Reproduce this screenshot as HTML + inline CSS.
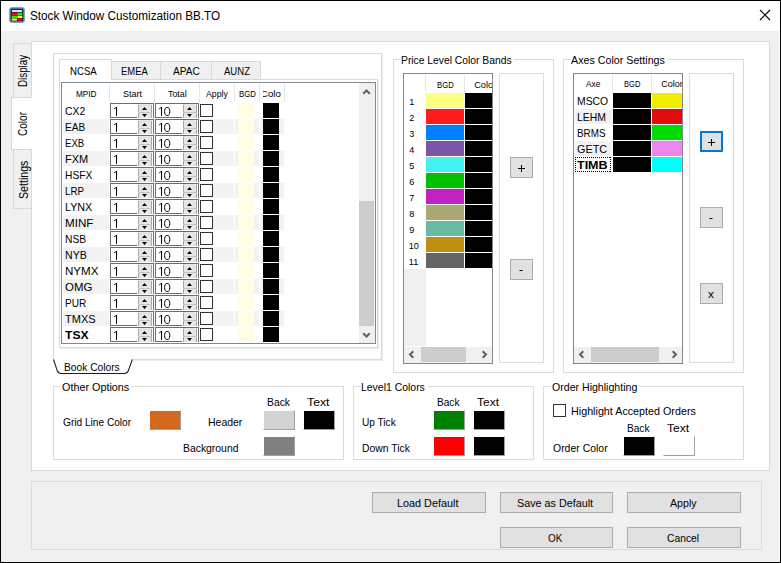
<!DOCTYPE html><html><head><meta charset="utf-8"><style>
html,body{margin:0;padding:0}
body{width:781px;height:563px;position:relative;overflow:hidden;background:#f0f0f0;font-family:"Liberation Sans",sans-serif}
.a{position:absolute;box-sizing:border-box}
.t{position:absolute;white-space:nowrap;line-height:normal}
</style></head><body>
<div class="a" style="left:0px;top:0px;width:781px;height:31px;background:#fff"></div>
<div class="a" style="left:0px;top:0px;width:1px;height:563px;background:#000"></div>
<div class="a" style="left:780px;top:0px;width:1px;height:563px;background:#000"></div>
<div class="a" style="left:0px;top:0px;width:781px;height:1px;background:#000"></div>
<div class="a" style="left:0px;top:562px;width:781px;height:1px;background:#000"></div>
<div class="a" style="left:779px;top:31px;width:1px;height:531px;background:#fff"></div>
<svg class="a" style="left:9px;top:7px" width="16" height="16" viewBox="0 0 16 16">
<rect x="0.5" y="0.5" width="15" height="15" rx="2.5" fill="#4f6f98" stroke="#86a0c0"/>
<rect x="2" y="2" width="12" height="12" fill="#1c2838"/>
<rect x="3" y="3" width="10" height="2" fill="#d4e0ff"/>
<rect x="2.7" y="5.8" width="5.2" height="2.3" fill="#f00"/><rect x="8.3" y="5.8" width="4.9" height="2.3" fill="#0f0"/>
<rect x="2.7" y="8.7" width="5.2" height="2.3" fill="#0f0"/><rect x="8.3" y="8.7" width="4.9" height="2.3" fill="#ff0"/>
<rect x="2.7" y="11.5" width="5.2" height="2.1" fill="#ff0"/><rect x="8.3" y="11.5" width="4.9" height="2.1" fill="#f00"/>
</svg>
<div id="title" class="t" style="left:30.00px;top:9.06px;font-size:11.87px;color:#000;"><span style="display:inline-block;transform-origin:0 0;transform:scaleX(0.9894);white-space:pre">Stock Window Customization BB.TO</span></div>
<svg class="a" style="left:755px;top:5px" width="20" height="20" viewBox="0 0 20 20"><path d="M5 5 L15 15 M15 5 L5 15" stroke="#000" stroke-width="1.1"/></svg>
<div class="a" style="left:31px;top:41px;width:739px;height:430px;background:#fff"></div>
<div class="a" style="left:31px;top:41px;width:739px;height:430px;border:1px solid #d9d9d9"></div>
<div class="a" style="left:13px;top:43px;width:18px;height:54px;background:#f0f0f0"></div>
<div class="a" style="left:13px;top:43px;width:18px;height:1px;background:#d9d9d9"></div>
<div class="a" style="left:13px;top:43px;width:1px;height:54px;background:#d9d9d9"></div>
<div class="a" style="left:13px;top:150px;width:18px;height:58px;background:#f0f0f0"></div>
<div class="a" style="left:13px;top:208px;width:18px;height:1px;background:#d9d9d9"></div>
<div class="a" style="left:13px;top:150px;width:1px;height:59px;background:#d9d9d9"></div>
<div class="a" style="left:13px;top:149px;width:18px;height:1px;background:#d9d9d9"></div>
<div class="a" style="left:11px;top:97px;width:21px;height:53px;background:#fff"></div>
<div class="a" style="left:11px;top:97px;width:21px;height:1px;background:#d9d9d9"></div>
<div class="a" style="left:11px;top:149px;width:21px;height:1px;background:#d9d9d9"></div>
<div class="a" style="left:11px;top:97px;width:1px;height:53px;background:#d9d9d9"></div>
<div id="tabDisplay" class="t" style="left:16.18px;top:86.90px;font-size:12.29px;transform-origin:0 0;transform:rotate(-90deg) scaleX(0.7965)">Display</div>
<div id="tabColor" class="t" style="left:15.07px;top:136.00px;font-size:12.85px;transform-origin:0 0;transform:rotate(-90deg) scaleX(0.7815)">Color</div>
<div id="tabSettings" class="t" style="left:16.73px;top:199.20px;font-size:12.01px;transform-origin:0 0;transform:rotate(-90deg) scaleX(0.8849)">Settings</div>
<div class="a" style="left:53px;top:53px;width:1px;height:307px;background:#d9d9d9"></div>
<div class="a" style="left:381px;top:53px;width:1px;height:307px;background:#d9d9d9"></div>
<div class="a" style="left:53px;top:53px;width:329px;height:1px;background:#d9d9d9"></div>
<div class="a" style="left:132px;top:359px;width:250px;height:1px;background:#d9d9d9"></div>
<div class="a" style="left:382px;top:54px;width:1px;height:307px;background:#ececec"></div>
<div class="a" style="left:133px;top:360px;width:250px;height:1px;background:#ececec"></div>
<svg class="a" style="left:0;top:0" width="781" height="563"><path d="M53.5 359.5 L57.3 370.8 Q58.3 373.5 61 373.5 L124.5 373.5 Q127.3 373.5 128.3 370.8 L132.3 359.5" fill="none" stroke="#1a1a1a" stroke-width="1.05"/></svg>
<div id="bookColors" class="t" style="left:64.30px;top:361.75px;font-size:10.34px;color:#000;"><span style="display:inline-block;transform-origin:0 0;transform:scaleX(0.9894);white-space:pre">Book Colors</span></div>
<div class="a" style="left:59px;top:79px;width:319px;height:269px;border:1px solid #d9d9d9"></div>
<div class="a" style="left:378px;top:80px;width:1px;height:269px;background:#ececec"></div>
<div class="a" style="left:60px;top:348px;width:319px;height:1px;background:#ececec"></div>
<div class="a" style="left:60px;top:59px;width:51px;height:21px;background:#fff"></div>
<div class="a" style="left:59px;top:59px;width:53px;height:1px;background:#d9d9d9"></div>
<div class="a" style="left:59px;top:59px;width:1px;height:21px;background:#d9d9d9"></div>
<div class="a" style="left:111px;top:59px;width:1px;height:21px;background:#d9d9d9"></div>
<div class="a" style="left:111px;top:61px;width:50px;height:18px;background:#f0f0f0"></div>
<div class="a" style="left:111px;top:61px;width:50px;height:1px;background:#d9d9d9"></div>
<div class="a" style="left:111px;top:61px;width:1px;height:18px;background:#d9d9d9"></div>
<div class="a" style="left:160px;top:61px;width:1px;height:18px;background:#d9d9d9"></div>
<div class="a" style="left:160px;top:61px;width:52px;height:18px;background:#f0f0f0"></div>
<div class="a" style="left:160px;top:61px;width:52px;height:1px;background:#d9d9d9"></div>
<div class="a" style="left:160px;top:61px;width:1px;height:18px;background:#d9d9d9"></div>
<div class="a" style="left:211px;top:61px;width:1px;height:18px;background:#d9d9d9"></div>
<div class="a" style="left:211px;top:61px;width:50px;height:18px;background:#f0f0f0"></div>
<div class="a" style="left:211px;top:61px;width:50px;height:1px;background:#d9d9d9"></div>
<div class="a" style="left:211px;top:61px;width:1px;height:18px;background:#d9d9d9"></div>
<div class="a" style="left:260px;top:61px;width:1px;height:18px;background:#d9d9d9"></div>
<div id="tNCSA" class="t" style="left:70.20px;top:64.77px;font-size:10.75px;color:#000;"><span style="display:inline-block;transform-origin:0 0;transform:scaleX(0.8971);white-space:pre">NCSA</span></div>
<div id="tEMEA" class="t" style="left:121.40px;top:65.65px;font-size:10.34px;color:#000;"><span style="display:inline-block;transform-origin:0 0;transform:scaleX(0.9184);white-space:pre">EMEA</span></div>
<div id="tAPAC" class="t" style="left:172.70px;top:65.65px;font-size:10.34px;color:#000;"><span style="display:inline-block;transform-origin:0 0;transform:scaleX(0.9789);white-space:pre">APAC</span></div>
<div id="tAUNZ" class="t" style="left:224.00px;top:65.65px;font-size:10.34px;color:#000;"><span style="display:inline-block;transform-origin:0 0;transform:scaleX(0.9242);white-space:pre">AUNZ</span></div>
<div class="a" style="left:61px;top:82px;width:315px;height:262px;border:1px solid #828790"></div>
<div class="a" style="left:109px;top:84px;width:1px;height:18px;background:#e5e5e5"></div>
<div class="a" style="left:154px;top:84px;width:1px;height:18px;background:#e5e5e5"></div>
<div class="a" style="left:199px;top:84px;width:1px;height:18px;background:#e5e5e5"></div>
<div class="a" style="left:234px;top:84px;width:1px;height:18px;background:#e5e5e5"></div>
<div class="a" style="left:259px;top:84px;width:1px;height:18px;background:#e5e5e5"></div>
<div class="a" style="left:284px;top:84px;width:1px;height:18px;background:#e5e5e5"></div>
<div id="h1" class="t" style="left:75.50px;top:88.66px;font-size:9.22px;color:#000;"><span style="display:inline-block;transform-origin:0 0;transform:scaleX(0.8896);white-space:pre">MPID</span></div>
<div id="h2" class="t" style="left:123.00px;top:88.66px;font-size:9.22px;color:#000;"><span style="display:inline-block;transform-origin:0 0;transform:scaleX(0.9760);white-space:pre">Start</span></div>
<div id="h3" class="t" style="left:168.00px;top:88.66px;font-size:9.22px;color:#000;"><span style="display:inline-block;transform-origin:0 0;transform:scaleX(0.9605);white-space:pre">Total</span></div>
<div id="h4" class="t" style="left:206.00px;top:88.66px;font-size:9.22px;color:#000;"><span style="display:inline-block;transform-origin:0 0;transform:scaleX(0.9456);white-space:pre">Apply</span></div>
<div id="h5" class="t" style="left:239.30px;top:88.66px;font-size:9.22px;color:#000;"><span style="display:inline-block;transform-origin:0 0;transform:scaleX(0.8461);white-space:pre">BGD</span></div>
<div class="a" style="left:263px;top:88.66px;width:18px;height:12.0px;overflow:hidden"><div id="h6" class="t" style="left:260.50px;top:88.66px;font-size:9.22px;color:#000;;left:-2.50px;top:0"><span style="display:inline-block;transform-origin:0 0;transform:scaleX(1.0440);white-space:pre">Color</span></div></div>
<div class="a" style="left:238px;top:103px;width:16px;height:15px;background:#fffde2"></div>
<div class="a" style="left:263px;top:103px;width:16px;height:15px;background:#000"></div>
<div id="n0" class="t" style="left:65.30px;top:105.01px;font-size:11.59px;color:#000;"><span style="display:inline-block;transform-origin:0 0;transform:scaleX(0.8959);white-space:pre">CX2</span></div>
<div class="a" style="left:110px;top:103px;width:44px;height:15px;background:#fff"></div>
<div class="a" style="left:110px;top:103px;width:44px;height:1px;background:#6d6d6d"></div>
<div class="a" style="left:110px;top:103px;width:1px;height:15px;background:#6d6d6d"></div>
<div class="a" style="left:153px;top:103px;width:1px;height:15px;background:#6d6d6d"></div>
<div class="a" style="left:110px;top:117px;width:27px;height:1px;background:#6d6d6d"></div>
<div class="a" style="left:138px;top:104px;width:14px;height:14px;background:#e6e6e6"></div>
<div class="a" style="left:138px;top:105px;width:1px;height:13px;background:#a6a6a6"></div>
<div class="a" style="left:151px;top:105px;width:1px;height:13px;background:#a6a6a6"></div>
<div class="a" style="left:138px;top:112px;width:14px;height:1px;background:#c4c4c4"></div>
<svg class="a" style="left:141px;top:106px" width="7" height="12"><path d="M1 4 L3.5 1 L6 4 Z M1 8 L3.5 11 L6 8 Z" fill="#000"/></svg>
<svg class="a" style="left:110px;top:103px" width="27" height="15"><path d="M6.5 4 V13 M4.2 5.8 L6.5 4.2" stroke="#000" stroke-width="1" fill="none"/></svg>
<div class="a" style="left:155px;top:103px;width:44px;height:15px;background:#fff"></div>
<div class="a" style="left:155px;top:103px;width:44px;height:1px;background:#6d6d6d"></div>
<div class="a" style="left:155px;top:103px;width:1px;height:15px;background:#6d6d6d"></div>
<div class="a" style="left:198px;top:103px;width:1px;height:15px;background:#6d6d6d"></div>
<div class="a" style="left:155px;top:117px;width:27px;height:1px;background:#6d6d6d"></div>
<div class="a" style="left:183px;top:104px;width:14px;height:14px;background:#e6e6e6"></div>
<div class="a" style="left:183px;top:105px;width:1px;height:13px;background:#a6a6a6"></div>
<div class="a" style="left:196px;top:105px;width:1px;height:13px;background:#a6a6a6"></div>
<div class="a" style="left:183px;top:112px;width:14px;height:1px;background:#c4c4c4"></div>
<svg class="a" style="left:186px;top:106px" width="7" height="12"><path d="M1 4 L3.5 1 L6 4 Z M1 8 L3.5 11 L6 8 Z" fill="#000"/></svg>
<svg class="a" style="left:155px;top:103px" width="27" height="15"><path d="M6.5 4 V13 M4.2 5.8 L6.5 4.2" stroke="#000" stroke-width="1" fill="none"/><ellipse cx="12.2" cy="8.5" rx="2.6" ry="4.05" stroke="#000" stroke-width="1" fill="none"/></svg>
<div class="a" style="left:200px;top:104px;width:13px;height:13px;border:1px solid #333"></div>
<div class="a" style="left:201px;top:105px;width:11px;height:11px;background:#fff"></div>
<div class="a" style="left:63px;top:119px;width:46px;height:15px;background:#f2f2f2"></div>
<div class="a" style="left:110px;top:119px;width:44px;height:15px;background:#f2f2f2"></div>
<div class="a" style="left:155px;top:119px;width:44px;height:15px;background:#f2f2f2"></div>
<div class="a" style="left:200px;top:119px;width:34px;height:15px;background:#f2f2f2"></div>
<div class="a" style="left:235px;top:119px;width:24px;height:15px;background:#f2f2f2"></div>
<div class="a" style="left:260px;top:119px;width:24px;height:15px;background:#f2f2f2"></div>
<div class="a" style="left:238px;top:119px;width:16px;height:15px;background:#fffde2"></div>
<div class="a" style="left:263px;top:119px;width:16px;height:15px;background:#000"></div>
<div id="n1" class="t" style="left:65.30px;top:121.01px;font-size:11.59px;color:#000;"><span style="display:inline-block;transform-origin:0 0;transform:scaleX(0.8708);white-space:pre">EAB</span></div>
<div class="a" style="left:110px;top:119px;width:44px;height:15px;background:#fff"></div>
<div class="a" style="left:110px;top:119px;width:44px;height:1px;background:#6d6d6d"></div>
<div class="a" style="left:110px;top:119px;width:1px;height:15px;background:#6d6d6d"></div>
<div class="a" style="left:153px;top:119px;width:1px;height:15px;background:#6d6d6d"></div>
<div class="a" style="left:110px;top:133px;width:27px;height:1px;background:#6d6d6d"></div>
<div class="a" style="left:138px;top:120px;width:14px;height:14px;background:#e6e6e6"></div>
<div class="a" style="left:138px;top:121px;width:1px;height:13px;background:#a6a6a6"></div>
<div class="a" style="left:151px;top:121px;width:1px;height:13px;background:#a6a6a6"></div>
<div class="a" style="left:138px;top:128px;width:14px;height:1px;background:#c4c4c4"></div>
<svg class="a" style="left:141px;top:122px" width="7" height="12"><path d="M1 4 L3.5 1 L6 4 Z M1 8 L3.5 11 L6 8 Z" fill="#000"/></svg>
<svg class="a" style="left:110px;top:119px" width="27" height="15"><path d="M6.5 4 V13 M4.2 5.8 L6.5 4.2" stroke="#000" stroke-width="1" fill="none"/></svg>
<div class="a" style="left:155px;top:119px;width:44px;height:15px;background:#fff"></div>
<div class="a" style="left:155px;top:119px;width:44px;height:1px;background:#6d6d6d"></div>
<div class="a" style="left:155px;top:119px;width:1px;height:15px;background:#6d6d6d"></div>
<div class="a" style="left:198px;top:119px;width:1px;height:15px;background:#6d6d6d"></div>
<div class="a" style="left:155px;top:133px;width:27px;height:1px;background:#6d6d6d"></div>
<div class="a" style="left:183px;top:120px;width:14px;height:14px;background:#e6e6e6"></div>
<div class="a" style="left:183px;top:121px;width:1px;height:13px;background:#a6a6a6"></div>
<div class="a" style="left:196px;top:121px;width:1px;height:13px;background:#a6a6a6"></div>
<div class="a" style="left:183px;top:128px;width:14px;height:1px;background:#c4c4c4"></div>
<svg class="a" style="left:186px;top:122px" width="7" height="12"><path d="M1 4 L3.5 1 L6 4 Z M1 8 L3.5 11 L6 8 Z" fill="#000"/></svg>
<svg class="a" style="left:155px;top:119px" width="27" height="15"><path d="M6.5 4 V13 M4.2 5.8 L6.5 4.2" stroke="#000" stroke-width="1" fill="none"/><ellipse cx="12.2" cy="8.5" rx="2.6" ry="4.05" stroke="#000" stroke-width="1" fill="none"/></svg>
<div class="a" style="left:200px;top:120px;width:13px;height:13px;border:1px solid #333"></div>
<div class="a" style="left:201px;top:121px;width:11px;height:11px;background:#fff"></div>
<div class="a" style="left:238px;top:135px;width:16px;height:15px;background:#fffde2"></div>
<div class="a" style="left:263px;top:135px;width:16px;height:15px;background:#000"></div>
<div id="n2" class="t" style="left:65.30px;top:137.01px;font-size:11.59px;color:#000;"><span style="display:inline-block;transform-origin:0 0;transform:scaleX(0.8320);white-space:pre">EXB</span></div>
<div class="a" style="left:110px;top:135px;width:44px;height:15px;background:#fff"></div>
<div class="a" style="left:110px;top:135px;width:44px;height:1px;background:#6d6d6d"></div>
<div class="a" style="left:110px;top:135px;width:1px;height:15px;background:#6d6d6d"></div>
<div class="a" style="left:153px;top:135px;width:1px;height:15px;background:#6d6d6d"></div>
<div class="a" style="left:110px;top:149px;width:27px;height:1px;background:#6d6d6d"></div>
<div class="a" style="left:138px;top:136px;width:14px;height:14px;background:#e6e6e6"></div>
<div class="a" style="left:138px;top:137px;width:1px;height:13px;background:#a6a6a6"></div>
<div class="a" style="left:151px;top:137px;width:1px;height:13px;background:#a6a6a6"></div>
<div class="a" style="left:138px;top:144px;width:14px;height:1px;background:#c4c4c4"></div>
<svg class="a" style="left:141px;top:138px" width="7" height="12"><path d="M1 4 L3.5 1 L6 4 Z M1 8 L3.5 11 L6 8 Z" fill="#000"/></svg>
<svg class="a" style="left:110px;top:135px" width="27" height="15"><path d="M6.5 4 V13 M4.2 5.8 L6.5 4.2" stroke="#000" stroke-width="1" fill="none"/></svg>
<div class="a" style="left:155px;top:135px;width:44px;height:15px;background:#fff"></div>
<div class="a" style="left:155px;top:135px;width:44px;height:1px;background:#6d6d6d"></div>
<div class="a" style="left:155px;top:135px;width:1px;height:15px;background:#6d6d6d"></div>
<div class="a" style="left:198px;top:135px;width:1px;height:15px;background:#6d6d6d"></div>
<div class="a" style="left:155px;top:149px;width:27px;height:1px;background:#6d6d6d"></div>
<div class="a" style="left:183px;top:136px;width:14px;height:14px;background:#e6e6e6"></div>
<div class="a" style="left:183px;top:137px;width:1px;height:13px;background:#a6a6a6"></div>
<div class="a" style="left:196px;top:137px;width:1px;height:13px;background:#a6a6a6"></div>
<div class="a" style="left:183px;top:144px;width:14px;height:1px;background:#c4c4c4"></div>
<svg class="a" style="left:186px;top:138px" width="7" height="12"><path d="M1 4 L3.5 1 L6 4 Z M1 8 L3.5 11 L6 8 Z" fill="#000"/></svg>
<svg class="a" style="left:155px;top:135px" width="27" height="15"><path d="M6.5 4 V13 M4.2 5.8 L6.5 4.2" stroke="#000" stroke-width="1" fill="none"/><ellipse cx="12.2" cy="8.5" rx="2.6" ry="4.05" stroke="#000" stroke-width="1" fill="none"/></svg>
<div class="a" style="left:200px;top:136px;width:13px;height:13px;border:1px solid #333"></div>
<div class="a" style="left:201px;top:137px;width:11px;height:11px;background:#fff"></div>
<div class="a" style="left:63px;top:151px;width:46px;height:15px;background:#f2f2f2"></div>
<div class="a" style="left:110px;top:151px;width:44px;height:15px;background:#f2f2f2"></div>
<div class="a" style="left:155px;top:151px;width:44px;height:15px;background:#f2f2f2"></div>
<div class="a" style="left:200px;top:151px;width:34px;height:15px;background:#f2f2f2"></div>
<div class="a" style="left:235px;top:151px;width:24px;height:15px;background:#f2f2f2"></div>
<div class="a" style="left:260px;top:151px;width:24px;height:15px;background:#f2f2f2"></div>
<div class="a" style="left:238px;top:151px;width:16px;height:15px;background:#fffde2"></div>
<div class="a" style="left:263px;top:151px;width:16px;height:15px;background:#000"></div>
<div id="n3" class="t" style="left:65.30px;top:153.01px;font-size:11.59px;color:#000;"><span style="display:inline-block;transform-origin:0 0;transform:scaleX(0.9521);white-space:pre">FXM</span></div>
<div class="a" style="left:110px;top:151px;width:44px;height:15px;background:#fff"></div>
<div class="a" style="left:110px;top:151px;width:44px;height:1px;background:#6d6d6d"></div>
<div class="a" style="left:110px;top:151px;width:1px;height:15px;background:#6d6d6d"></div>
<div class="a" style="left:153px;top:151px;width:1px;height:15px;background:#6d6d6d"></div>
<div class="a" style="left:110px;top:165px;width:27px;height:1px;background:#6d6d6d"></div>
<div class="a" style="left:138px;top:152px;width:14px;height:14px;background:#e6e6e6"></div>
<div class="a" style="left:138px;top:153px;width:1px;height:13px;background:#a6a6a6"></div>
<div class="a" style="left:151px;top:153px;width:1px;height:13px;background:#a6a6a6"></div>
<div class="a" style="left:138px;top:160px;width:14px;height:1px;background:#c4c4c4"></div>
<svg class="a" style="left:141px;top:154px" width="7" height="12"><path d="M1 4 L3.5 1 L6 4 Z M1 8 L3.5 11 L6 8 Z" fill="#000"/></svg>
<svg class="a" style="left:110px;top:151px" width="27" height="15"><path d="M6.5 4 V13 M4.2 5.8 L6.5 4.2" stroke="#000" stroke-width="1" fill="none"/></svg>
<div class="a" style="left:155px;top:151px;width:44px;height:15px;background:#fff"></div>
<div class="a" style="left:155px;top:151px;width:44px;height:1px;background:#6d6d6d"></div>
<div class="a" style="left:155px;top:151px;width:1px;height:15px;background:#6d6d6d"></div>
<div class="a" style="left:198px;top:151px;width:1px;height:15px;background:#6d6d6d"></div>
<div class="a" style="left:155px;top:165px;width:27px;height:1px;background:#6d6d6d"></div>
<div class="a" style="left:183px;top:152px;width:14px;height:14px;background:#e6e6e6"></div>
<div class="a" style="left:183px;top:153px;width:1px;height:13px;background:#a6a6a6"></div>
<div class="a" style="left:196px;top:153px;width:1px;height:13px;background:#a6a6a6"></div>
<div class="a" style="left:183px;top:160px;width:14px;height:1px;background:#c4c4c4"></div>
<svg class="a" style="left:186px;top:154px" width="7" height="12"><path d="M1 4 L3.5 1 L6 4 Z M1 8 L3.5 11 L6 8 Z" fill="#000"/></svg>
<svg class="a" style="left:155px;top:151px" width="27" height="15"><path d="M6.5 4 V13 M4.2 5.8 L6.5 4.2" stroke="#000" stroke-width="1" fill="none"/><ellipse cx="12.2" cy="8.5" rx="2.6" ry="4.05" stroke="#000" stroke-width="1" fill="none"/></svg>
<div class="a" style="left:200px;top:152px;width:13px;height:13px;border:1px solid #333"></div>
<div class="a" style="left:201px;top:153px;width:11px;height:11px;background:#fff"></div>
<div class="a" style="left:238px;top:167px;width:16px;height:15px;background:#fffde2"></div>
<div class="a" style="left:263px;top:167px;width:16px;height:15px;background:#000"></div>
<div id="n4" class="t" style="left:65.30px;top:169.01px;font-size:11.59px;color:#000;"><span style="display:inline-block;transform-origin:0 0;transform:scaleX(0.8830);white-space:pre">HSFX</span></div>
<div class="a" style="left:110px;top:167px;width:44px;height:15px;background:#fff"></div>
<div class="a" style="left:110px;top:167px;width:44px;height:1px;background:#6d6d6d"></div>
<div class="a" style="left:110px;top:167px;width:1px;height:15px;background:#6d6d6d"></div>
<div class="a" style="left:153px;top:167px;width:1px;height:15px;background:#6d6d6d"></div>
<div class="a" style="left:110px;top:181px;width:27px;height:1px;background:#6d6d6d"></div>
<div class="a" style="left:138px;top:168px;width:14px;height:14px;background:#e6e6e6"></div>
<div class="a" style="left:138px;top:169px;width:1px;height:13px;background:#a6a6a6"></div>
<div class="a" style="left:151px;top:169px;width:1px;height:13px;background:#a6a6a6"></div>
<div class="a" style="left:138px;top:176px;width:14px;height:1px;background:#c4c4c4"></div>
<svg class="a" style="left:141px;top:170px" width="7" height="12"><path d="M1 4 L3.5 1 L6 4 Z M1 8 L3.5 11 L6 8 Z" fill="#000"/></svg>
<svg class="a" style="left:110px;top:167px" width="27" height="15"><path d="M6.5 4 V13 M4.2 5.8 L6.5 4.2" stroke="#000" stroke-width="1" fill="none"/></svg>
<div class="a" style="left:155px;top:167px;width:44px;height:15px;background:#fff"></div>
<div class="a" style="left:155px;top:167px;width:44px;height:1px;background:#6d6d6d"></div>
<div class="a" style="left:155px;top:167px;width:1px;height:15px;background:#6d6d6d"></div>
<div class="a" style="left:198px;top:167px;width:1px;height:15px;background:#6d6d6d"></div>
<div class="a" style="left:155px;top:181px;width:27px;height:1px;background:#6d6d6d"></div>
<div class="a" style="left:183px;top:168px;width:14px;height:14px;background:#e6e6e6"></div>
<div class="a" style="left:183px;top:169px;width:1px;height:13px;background:#a6a6a6"></div>
<div class="a" style="left:196px;top:169px;width:1px;height:13px;background:#a6a6a6"></div>
<div class="a" style="left:183px;top:176px;width:14px;height:1px;background:#c4c4c4"></div>
<svg class="a" style="left:186px;top:170px" width="7" height="12"><path d="M1 4 L3.5 1 L6 4 Z M1 8 L3.5 11 L6 8 Z" fill="#000"/></svg>
<svg class="a" style="left:155px;top:167px" width="27" height="15"><path d="M6.5 4 V13 M4.2 5.8 L6.5 4.2" stroke="#000" stroke-width="1" fill="none"/><ellipse cx="12.2" cy="8.5" rx="2.6" ry="4.05" stroke="#000" stroke-width="1" fill="none"/></svg>
<div class="a" style="left:200px;top:168px;width:13px;height:13px;border:1px solid #333"></div>
<div class="a" style="left:201px;top:169px;width:11px;height:11px;background:#fff"></div>
<div class="a" style="left:63px;top:183px;width:46px;height:15px;background:#f2f2f2"></div>
<div class="a" style="left:110px;top:183px;width:44px;height:15px;background:#f2f2f2"></div>
<div class="a" style="left:155px;top:183px;width:44px;height:15px;background:#f2f2f2"></div>
<div class="a" style="left:200px;top:183px;width:34px;height:15px;background:#f2f2f2"></div>
<div class="a" style="left:235px;top:183px;width:24px;height:15px;background:#f2f2f2"></div>
<div class="a" style="left:260px;top:183px;width:24px;height:15px;background:#f2f2f2"></div>
<div class="a" style="left:238px;top:183px;width:16px;height:15px;background:#fffde2"></div>
<div class="a" style="left:263px;top:183px;width:16px;height:15px;background:#000"></div>
<div id="n5" class="t" style="left:65.30px;top:185.01px;font-size:11.59px;color:#000;"><span style="display:inline-block;transform-origin:0 0;transform:scaleX(0.8427);white-space:pre">LRP</span></div>
<div class="a" style="left:110px;top:183px;width:44px;height:15px;background:#fff"></div>
<div class="a" style="left:110px;top:183px;width:44px;height:1px;background:#6d6d6d"></div>
<div class="a" style="left:110px;top:183px;width:1px;height:15px;background:#6d6d6d"></div>
<div class="a" style="left:153px;top:183px;width:1px;height:15px;background:#6d6d6d"></div>
<div class="a" style="left:110px;top:197px;width:27px;height:1px;background:#6d6d6d"></div>
<div class="a" style="left:138px;top:184px;width:14px;height:14px;background:#e6e6e6"></div>
<div class="a" style="left:138px;top:185px;width:1px;height:13px;background:#a6a6a6"></div>
<div class="a" style="left:151px;top:185px;width:1px;height:13px;background:#a6a6a6"></div>
<div class="a" style="left:138px;top:192px;width:14px;height:1px;background:#c4c4c4"></div>
<svg class="a" style="left:141px;top:186px" width="7" height="12"><path d="M1 4 L3.5 1 L6 4 Z M1 8 L3.5 11 L6 8 Z" fill="#000"/></svg>
<svg class="a" style="left:110px;top:183px" width="27" height="15"><path d="M6.5 4 V13 M4.2 5.8 L6.5 4.2" stroke="#000" stroke-width="1" fill="none"/></svg>
<div class="a" style="left:155px;top:183px;width:44px;height:15px;background:#fff"></div>
<div class="a" style="left:155px;top:183px;width:44px;height:1px;background:#6d6d6d"></div>
<div class="a" style="left:155px;top:183px;width:1px;height:15px;background:#6d6d6d"></div>
<div class="a" style="left:198px;top:183px;width:1px;height:15px;background:#6d6d6d"></div>
<div class="a" style="left:155px;top:197px;width:27px;height:1px;background:#6d6d6d"></div>
<div class="a" style="left:183px;top:184px;width:14px;height:14px;background:#e6e6e6"></div>
<div class="a" style="left:183px;top:185px;width:1px;height:13px;background:#a6a6a6"></div>
<div class="a" style="left:196px;top:185px;width:1px;height:13px;background:#a6a6a6"></div>
<div class="a" style="left:183px;top:192px;width:14px;height:1px;background:#c4c4c4"></div>
<svg class="a" style="left:186px;top:186px" width="7" height="12"><path d="M1 4 L3.5 1 L6 4 Z M1 8 L3.5 11 L6 8 Z" fill="#000"/></svg>
<svg class="a" style="left:155px;top:183px" width="27" height="15"><path d="M6.5 4 V13 M4.2 5.8 L6.5 4.2" stroke="#000" stroke-width="1" fill="none"/><ellipse cx="12.2" cy="8.5" rx="2.6" ry="4.05" stroke="#000" stroke-width="1" fill="none"/></svg>
<div class="a" style="left:200px;top:184px;width:13px;height:13px;border:1px solid #333"></div>
<div class="a" style="left:201px;top:185px;width:11px;height:11px;background:#fff"></div>
<div class="a" style="left:238px;top:199px;width:16px;height:15px;background:#fffde2"></div>
<div class="a" style="left:263px;top:199px;width:16px;height:15px;background:#000"></div>
<div id="n6" class="t" style="left:65.30px;top:201.01px;font-size:11.59px;color:#000;"><span style="display:inline-block;transform-origin:0 0;transform:scaleX(0.9279);white-space:pre">LYNX</span></div>
<div class="a" style="left:110px;top:199px;width:44px;height:15px;background:#fff"></div>
<div class="a" style="left:110px;top:199px;width:44px;height:1px;background:#6d6d6d"></div>
<div class="a" style="left:110px;top:199px;width:1px;height:15px;background:#6d6d6d"></div>
<div class="a" style="left:153px;top:199px;width:1px;height:15px;background:#6d6d6d"></div>
<div class="a" style="left:110px;top:213px;width:27px;height:1px;background:#6d6d6d"></div>
<div class="a" style="left:138px;top:200px;width:14px;height:14px;background:#e6e6e6"></div>
<div class="a" style="left:138px;top:201px;width:1px;height:13px;background:#a6a6a6"></div>
<div class="a" style="left:151px;top:201px;width:1px;height:13px;background:#a6a6a6"></div>
<div class="a" style="left:138px;top:208px;width:14px;height:1px;background:#c4c4c4"></div>
<svg class="a" style="left:141px;top:202px" width="7" height="12"><path d="M1 4 L3.5 1 L6 4 Z M1 8 L3.5 11 L6 8 Z" fill="#000"/></svg>
<svg class="a" style="left:110px;top:199px" width="27" height="15"><path d="M6.5 4 V13 M4.2 5.8 L6.5 4.2" stroke="#000" stroke-width="1" fill="none"/></svg>
<div class="a" style="left:155px;top:199px;width:44px;height:15px;background:#fff"></div>
<div class="a" style="left:155px;top:199px;width:44px;height:1px;background:#6d6d6d"></div>
<div class="a" style="left:155px;top:199px;width:1px;height:15px;background:#6d6d6d"></div>
<div class="a" style="left:198px;top:199px;width:1px;height:15px;background:#6d6d6d"></div>
<div class="a" style="left:155px;top:213px;width:27px;height:1px;background:#6d6d6d"></div>
<div class="a" style="left:183px;top:200px;width:14px;height:14px;background:#e6e6e6"></div>
<div class="a" style="left:183px;top:201px;width:1px;height:13px;background:#a6a6a6"></div>
<div class="a" style="left:196px;top:201px;width:1px;height:13px;background:#a6a6a6"></div>
<div class="a" style="left:183px;top:208px;width:14px;height:1px;background:#c4c4c4"></div>
<svg class="a" style="left:186px;top:202px" width="7" height="12"><path d="M1 4 L3.5 1 L6 4 Z M1 8 L3.5 11 L6 8 Z" fill="#000"/></svg>
<svg class="a" style="left:155px;top:199px" width="27" height="15"><path d="M6.5 4 V13 M4.2 5.8 L6.5 4.2" stroke="#000" stroke-width="1" fill="none"/><ellipse cx="12.2" cy="8.5" rx="2.6" ry="4.05" stroke="#000" stroke-width="1" fill="none"/></svg>
<div class="a" style="left:200px;top:200px;width:13px;height:13px;border:1px solid #333"></div>
<div class="a" style="left:201px;top:201px;width:11px;height:11px;background:#fff"></div>
<div class="a" style="left:63px;top:215px;width:46px;height:15px;background:#f2f2f2"></div>
<div class="a" style="left:110px;top:215px;width:44px;height:15px;background:#f2f2f2"></div>
<div class="a" style="left:155px;top:215px;width:44px;height:15px;background:#f2f2f2"></div>
<div class="a" style="left:200px;top:215px;width:34px;height:15px;background:#f2f2f2"></div>
<div class="a" style="left:235px;top:215px;width:24px;height:15px;background:#f2f2f2"></div>
<div class="a" style="left:260px;top:215px;width:24px;height:15px;background:#f2f2f2"></div>
<div class="a" style="left:238px;top:215px;width:16px;height:15px;background:#fffde2"></div>
<div class="a" style="left:263px;top:215px;width:16px;height:15px;background:#000"></div>
<div id="n7" class="t" style="left:65.30px;top:217.01px;font-size:11.59px;color:#000;"><span style="display:inline-block;transform-origin:0 0;transform:scaleX(1.0060);white-space:pre">MINF</span></div>
<div class="a" style="left:110px;top:215px;width:44px;height:15px;background:#fff"></div>
<div class="a" style="left:110px;top:215px;width:44px;height:1px;background:#6d6d6d"></div>
<div class="a" style="left:110px;top:215px;width:1px;height:15px;background:#6d6d6d"></div>
<div class="a" style="left:153px;top:215px;width:1px;height:15px;background:#6d6d6d"></div>
<div class="a" style="left:110px;top:229px;width:27px;height:1px;background:#6d6d6d"></div>
<div class="a" style="left:138px;top:216px;width:14px;height:14px;background:#e6e6e6"></div>
<div class="a" style="left:138px;top:217px;width:1px;height:13px;background:#a6a6a6"></div>
<div class="a" style="left:151px;top:217px;width:1px;height:13px;background:#a6a6a6"></div>
<div class="a" style="left:138px;top:224px;width:14px;height:1px;background:#c4c4c4"></div>
<svg class="a" style="left:141px;top:218px" width="7" height="12"><path d="M1 4 L3.5 1 L6 4 Z M1 8 L3.5 11 L6 8 Z" fill="#000"/></svg>
<svg class="a" style="left:110px;top:215px" width="27" height="15"><path d="M6.5 4 V13 M4.2 5.8 L6.5 4.2" stroke="#000" stroke-width="1" fill="none"/></svg>
<div class="a" style="left:155px;top:215px;width:44px;height:15px;background:#fff"></div>
<div class="a" style="left:155px;top:215px;width:44px;height:1px;background:#6d6d6d"></div>
<div class="a" style="left:155px;top:215px;width:1px;height:15px;background:#6d6d6d"></div>
<div class="a" style="left:198px;top:215px;width:1px;height:15px;background:#6d6d6d"></div>
<div class="a" style="left:155px;top:229px;width:27px;height:1px;background:#6d6d6d"></div>
<div class="a" style="left:183px;top:216px;width:14px;height:14px;background:#e6e6e6"></div>
<div class="a" style="left:183px;top:217px;width:1px;height:13px;background:#a6a6a6"></div>
<div class="a" style="left:196px;top:217px;width:1px;height:13px;background:#a6a6a6"></div>
<div class="a" style="left:183px;top:224px;width:14px;height:1px;background:#c4c4c4"></div>
<svg class="a" style="left:186px;top:218px" width="7" height="12"><path d="M1 4 L3.5 1 L6 4 Z M1 8 L3.5 11 L6 8 Z" fill="#000"/></svg>
<svg class="a" style="left:155px;top:215px" width="27" height="15"><path d="M6.5 4 V13 M4.2 5.8 L6.5 4.2" stroke="#000" stroke-width="1" fill="none"/><ellipse cx="12.2" cy="8.5" rx="2.6" ry="4.05" stroke="#000" stroke-width="1" fill="none"/></svg>
<div class="a" style="left:200px;top:216px;width:13px;height:13px;border:1px solid #333"></div>
<div class="a" style="left:201px;top:217px;width:11px;height:11px;background:#fff"></div>
<div class="a" style="left:238px;top:231px;width:16px;height:15px;background:#fffde2"></div>
<div class="a" style="left:263px;top:231px;width:16px;height:15px;background:#000"></div>
<div id="n8" class="t" style="left:65.30px;top:233.01px;font-size:11.59px;color:#000;"><span style="display:inline-block;transform-origin:0 0;transform:scaleX(0.8853);white-space:pre">NSB</span></div>
<div class="a" style="left:110px;top:231px;width:44px;height:15px;background:#fff"></div>
<div class="a" style="left:110px;top:231px;width:44px;height:1px;background:#6d6d6d"></div>
<div class="a" style="left:110px;top:231px;width:1px;height:15px;background:#6d6d6d"></div>
<div class="a" style="left:153px;top:231px;width:1px;height:15px;background:#6d6d6d"></div>
<div class="a" style="left:110px;top:245px;width:27px;height:1px;background:#6d6d6d"></div>
<div class="a" style="left:138px;top:232px;width:14px;height:14px;background:#e6e6e6"></div>
<div class="a" style="left:138px;top:233px;width:1px;height:13px;background:#a6a6a6"></div>
<div class="a" style="left:151px;top:233px;width:1px;height:13px;background:#a6a6a6"></div>
<div class="a" style="left:138px;top:240px;width:14px;height:1px;background:#c4c4c4"></div>
<svg class="a" style="left:141px;top:234px" width="7" height="12"><path d="M1 4 L3.5 1 L6 4 Z M1 8 L3.5 11 L6 8 Z" fill="#000"/></svg>
<svg class="a" style="left:110px;top:231px" width="27" height="15"><path d="M6.5 4 V13 M4.2 5.8 L6.5 4.2" stroke="#000" stroke-width="1" fill="none"/></svg>
<div class="a" style="left:155px;top:231px;width:44px;height:15px;background:#fff"></div>
<div class="a" style="left:155px;top:231px;width:44px;height:1px;background:#6d6d6d"></div>
<div class="a" style="left:155px;top:231px;width:1px;height:15px;background:#6d6d6d"></div>
<div class="a" style="left:198px;top:231px;width:1px;height:15px;background:#6d6d6d"></div>
<div class="a" style="left:155px;top:245px;width:27px;height:1px;background:#6d6d6d"></div>
<div class="a" style="left:183px;top:232px;width:14px;height:14px;background:#e6e6e6"></div>
<div class="a" style="left:183px;top:233px;width:1px;height:13px;background:#a6a6a6"></div>
<div class="a" style="left:196px;top:233px;width:1px;height:13px;background:#a6a6a6"></div>
<div class="a" style="left:183px;top:240px;width:14px;height:1px;background:#c4c4c4"></div>
<svg class="a" style="left:186px;top:234px" width="7" height="12"><path d="M1 4 L3.5 1 L6 4 Z M1 8 L3.5 11 L6 8 Z" fill="#000"/></svg>
<svg class="a" style="left:155px;top:231px" width="27" height="15"><path d="M6.5 4 V13 M4.2 5.8 L6.5 4.2" stroke="#000" stroke-width="1" fill="none"/><ellipse cx="12.2" cy="8.5" rx="2.6" ry="4.05" stroke="#000" stroke-width="1" fill="none"/></svg>
<div class="a" style="left:200px;top:232px;width:13px;height:13px;border:1px solid #333"></div>
<div class="a" style="left:201px;top:233px;width:11px;height:11px;background:#fff"></div>
<div class="a" style="left:63px;top:247px;width:46px;height:15px;background:#f2f2f2"></div>
<div class="a" style="left:110px;top:247px;width:44px;height:15px;background:#f2f2f2"></div>
<div class="a" style="left:155px;top:247px;width:44px;height:15px;background:#f2f2f2"></div>
<div class="a" style="left:200px;top:247px;width:34px;height:15px;background:#f2f2f2"></div>
<div class="a" style="left:235px;top:247px;width:24px;height:15px;background:#f2f2f2"></div>
<div class="a" style="left:260px;top:247px;width:24px;height:15px;background:#f2f2f2"></div>
<div class="a" style="left:238px;top:247px;width:16px;height:15px;background:#fffde2"></div>
<div class="a" style="left:263px;top:247px;width:16px;height:15px;background:#000"></div>
<div id="n9" class="t" style="left:65.30px;top:249.01px;font-size:11.59px;color:#000;"><span style="display:inline-block;transform-origin:0 0;transform:scaleX(0.9147);white-space:pre">NYB</span></div>
<div class="a" style="left:110px;top:247px;width:44px;height:15px;background:#fff"></div>
<div class="a" style="left:110px;top:247px;width:44px;height:1px;background:#6d6d6d"></div>
<div class="a" style="left:110px;top:247px;width:1px;height:15px;background:#6d6d6d"></div>
<div class="a" style="left:153px;top:247px;width:1px;height:15px;background:#6d6d6d"></div>
<div class="a" style="left:110px;top:261px;width:27px;height:1px;background:#6d6d6d"></div>
<div class="a" style="left:138px;top:248px;width:14px;height:14px;background:#e6e6e6"></div>
<div class="a" style="left:138px;top:249px;width:1px;height:13px;background:#a6a6a6"></div>
<div class="a" style="left:151px;top:249px;width:1px;height:13px;background:#a6a6a6"></div>
<div class="a" style="left:138px;top:256px;width:14px;height:1px;background:#c4c4c4"></div>
<svg class="a" style="left:141px;top:250px" width="7" height="12"><path d="M1 4 L3.5 1 L6 4 Z M1 8 L3.5 11 L6 8 Z" fill="#000"/></svg>
<svg class="a" style="left:110px;top:247px" width="27" height="15"><path d="M6.5 4 V13 M4.2 5.8 L6.5 4.2" stroke="#000" stroke-width="1" fill="none"/></svg>
<div class="a" style="left:155px;top:247px;width:44px;height:15px;background:#fff"></div>
<div class="a" style="left:155px;top:247px;width:44px;height:1px;background:#6d6d6d"></div>
<div class="a" style="left:155px;top:247px;width:1px;height:15px;background:#6d6d6d"></div>
<div class="a" style="left:198px;top:247px;width:1px;height:15px;background:#6d6d6d"></div>
<div class="a" style="left:155px;top:261px;width:27px;height:1px;background:#6d6d6d"></div>
<div class="a" style="left:183px;top:248px;width:14px;height:14px;background:#e6e6e6"></div>
<div class="a" style="left:183px;top:249px;width:1px;height:13px;background:#a6a6a6"></div>
<div class="a" style="left:196px;top:249px;width:1px;height:13px;background:#a6a6a6"></div>
<div class="a" style="left:183px;top:256px;width:14px;height:1px;background:#c4c4c4"></div>
<svg class="a" style="left:186px;top:250px" width="7" height="12"><path d="M1 4 L3.5 1 L6 4 Z M1 8 L3.5 11 L6 8 Z" fill="#000"/></svg>
<svg class="a" style="left:155px;top:247px" width="27" height="15"><path d="M6.5 4 V13 M4.2 5.8 L6.5 4.2" stroke="#000" stroke-width="1" fill="none"/><ellipse cx="12.2" cy="8.5" rx="2.6" ry="4.05" stroke="#000" stroke-width="1" fill="none"/></svg>
<div class="a" style="left:200px;top:248px;width:13px;height:13px;border:1px solid #333"></div>
<div class="a" style="left:201px;top:249px;width:11px;height:11px;background:#fff"></div>
<div class="a" style="left:238px;top:263px;width:16px;height:15px;background:#fffde2"></div>
<div class="a" style="left:263px;top:263px;width:16px;height:15px;background:#000"></div>
<div id="n10" class="t" style="left:65.30px;top:265.01px;font-size:11.59px;color:#000;"><span style="display:inline-block;transform-origin:0 0;transform:scaleX(1.0003);white-space:pre">NYMX</span></div>
<div class="a" style="left:110px;top:263px;width:44px;height:15px;background:#fff"></div>
<div class="a" style="left:110px;top:263px;width:44px;height:1px;background:#6d6d6d"></div>
<div class="a" style="left:110px;top:263px;width:1px;height:15px;background:#6d6d6d"></div>
<div class="a" style="left:153px;top:263px;width:1px;height:15px;background:#6d6d6d"></div>
<div class="a" style="left:110px;top:277px;width:27px;height:1px;background:#6d6d6d"></div>
<div class="a" style="left:138px;top:264px;width:14px;height:14px;background:#e6e6e6"></div>
<div class="a" style="left:138px;top:265px;width:1px;height:13px;background:#a6a6a6"></div>
<div class="a" style="left:151px;top:265px;width:1px;height:13px;background:#a6a6a6"></div>
<div class="a" style="left:138px;top:272px;width:14px;height:1px;background:#c4c4c4"></div>
<svg class="a" style="left:141px;top:266px" width="7" height="12"><path d="M1 4 L3.5 1 L6 4 Z M1 8 L3.5 11 L6 8 Z" fill="#000"/></svg>
<svg class="a" style="left:110px;top:263px" width="27" height="15"><path d="M6.5 4 V13 M4.2 5.8 L6.5 4.2" stroke="#000" stroke-width="1" fill="none"/></svg>
<div class="a" style="left:155px;top:263px;width:44px;height:15px;background:#fff"></div>
<div class="a" style="left:155px;top:263px;width:44px;height:1px;background:#6d6d6d"></div>
<div class="a" style="left:155px;top:263px;width:1px;height:15px;background:#6d6d6d"></div>
<div class="a" style="left:198px;top:263px;width:1px;height:15px;background:#6d6d6d"></div>
<div class="a" style="left:155px;top:277px;width:27px;height:1px;background:#6d6d6d"></div>
<div class="a" style="left:183px;top:264px;width:14px;height:14px;background:#e6e6e6"></div>
<div class="a" style="left:183px;top:265px;width:1px;height:13px;background:#a6a6a6"></div>
<div class="a" style="left:196px;top:265px;width:1px;height:13px;background:#a6a6a6"></div>
<div class="a" style="left:183px;top:272px;width:14px;height:1px;background:#c4c4c4"></div>
<svg class="a" style="left:186px;top:266px" width="7" height="12"><path d="M1 4 L3.5 1 L6 4 Z M1 8 L3.5 11 L6 8 Z" fill="#000"/></svg>
<svg class="a" style="left:155px;top:263px" width="27" height="15"><path d="M6.5 4 V13 M4.2 5.8 L6.5 4.2" stroke="#000" stroke-width="1" fill="none"/><ellipse cx="12.2" cy="8.5" rx="2.6" ry="4.05" stroke="#000" stroke-width="1" fill="none"/></svg>
<div class="a" style="left:200px;top:264px;width:13px;height:13px;border:1px solid #333"></div>
<div class="a" style="left:201px;top:265px;width:11px;height:11px;background:#fff"></div>
<div class="a" style="left:63px;top:279px;width:46px;height:15px;background:#f2f2f2"></div>
<div class="a" style="left:110px;top:279px;width:44px;height:15px;background:#f2f2f2"></div>
<div class="a" style="left:155px;top:279px;width:44px;height:15px;background:#f2f2f2"></div>
<div class="a" style="left:200px;top:279px;width:34px;height:15px;background:#f2f2f2"></div>
<div class="a" style="left:235px;top:279px;width:24px;height:15px;background:#f2f2f2"></div>
<div class="a" style="left:260px;top:279px;width:24px;height:15px;background:#f2f2f2"></div>
<div class="a" style="left:238px;top:279px;width:16px;height:15px;background:#fffde2"></div>
<div class="a" style="left:263px;top:279px;width:16px;height:15px;background:#000"></div>
<div id="n11" class="t" style="left:65.30px;top:281.01px;font-size:11.59px;color:#000;"><span style="display:inline-block;transform-origin:0 0;transform:scaleX(0.9858);white-space:pre">OMG</span></div>
<div class="a" style="left:110px;top:279px;width:44px;height:15px;background:#fff"></div>
<div class="a" style="left:110px;top:279px;width:44px;height:1px;background:#6d6d6d"></div>
<div class="a" style="left:110px;top:279px;width:1px;height:15px;background:#6d6d6d"></div>
<div class="a" style="left:153px;top:279px;width:1px;height:15px;background:#6d6d6d"></div>
<div class="a" style="left:110px;top:293px;width:27px;height:1px;background:#6d6d6d"></div>
<div class="a" style="left:138px;top:280px;width:14px;height:14px;background:#e6e6e6"></div>
<div class="a" style="left:138px;top:281px;width:1px;height:13px;background:#a6a6a6"></div>
<div class="a" style="left:151px;top:281px;width:1px;height:13px;background:#a6a6a6"></div>
<div class="a" style="left:138px;top:288px;width:14px;height:1px;background:#c4c4c4"></div>
<svg class="a" style="left:141px;top:282px" width="7" height="12"><path d="M1 4 L3.5 1 L6 4 Z M1 8 L3.5 11 L6 8 Z" fill="#000"/></svg>
<svg class="a" style="left:110px;top:279px" width="27" height="15"><path d="M6.5 4 V13 M4.2 5.8 L6.5 4.2" stroke="#000" stroke-width="1" fill="none"/></svg>
<div class="a" style="left:155px;top:279px;width:44px;height:15px;background:#fff"></div>
<div class="a" style="left:155px;top:279px;width:44px;height:1px;background:#6d6d6d"></div>
<div class="a" style="left:155px;top:279px;width:1px;height:15px;background:#6d6d6d"></div>
<div class="a" style="left:198px;top:279px;width:1px;height:15px;background:#6d6d6d"></div>
<div class="a" style="left:155px;top:293px;width:27px;height:1px;background:#6d6d6d"></div>
<div class="a" style="left:183px;top:280px;width:14px;height:14px;background:#e6e6e6"></div>
<div class="a" style="left:183px;top:281px;width:1px;height:13px;background:#a6a6a6"></div>
<div class="a" style="left:196px;top:281px;width:1px;height:13px;background:#a6a6a6"></div>
<div class="a" style="left:183px;top:288px;width:14px;height:1px;background:#c4c4c4"></div>
<svg class="a" style="left:186px;top:282px" width="7" height="12"><path d="M1 4 L3.5 1 L6 4 Z M1 8 L3.5 11 L6 8 Z" fill="#000"/></svg>
<svg class="a" style="left:155px;top:279px" width="27" height="15"><path d="M6.5 4 V13 M4.2 5.8 L6.5 4.2" stroke="#000" stroke-width="1" fill="none"/><ellipse cx="12.2" cy="8.5" rx="2.6" ry="4.05" stroke="#000" stroke-width="1" fill="none"/></svg>
<div class="a" style="left:200px;top:280px;width:13px;height:13px;border:1px solid #333"></div>
<div class="a" style="left:201px;top:281px;width:11px;height:11px;background:#fff"></div>
<div class="a" style="left:238px;top:295px;width:16px;height:15px;background:#fffde2"></div>
<div class="a" style="left:263px;top:295px;width:16px;height:15px;background:#000"></div>
<div id="n12" class="t" style="left:65.30px;top:297.01px;font-size:11.59px;color:#000;"><span style="display:inline-block;transform-origin:0 0;transform:scaleX(0.8704);white-space:pre">PUR</span></div>
<div class="a" style="left:110px;top:295px;width:44px;height:15px;background:#fff"></div>
<div class="a" style="left:110px;top:295px;width:44px;height:1px;background:#6d6d6d"></div>
<div class="a" style="left:110px;top:295px;width:1px;height:15px;background:#6d6d6d"></div>
<div class="a" style="left:153px;top:295px;width:1px;height:15px;background:#6d6d6d"></div>
<div class="a" style="left:110px;top:309px;width:27px;height:1px;background:#6d6d6d"></div>
<div class="a" style="left:138px;top:296px;width:14px;height:14px;background:#e6e6e6"></div>
<div class="a" style="left:138px;top:297px;width:1px;height:13px;background:#a6a6a6"></div>
<div class="a" style="left:151px;top:297px;width:1px;height:13px;background:#a6a6a6"></div>
<div class="a" style="left:138px;top:304px;width:14px;height:1px;background:#c4c4c4"></div>
<svg class="a" style="left:141px;top:298px" width="7" height="12"><path d="M1 4 L3.5 1 L6 4 Z M1 8 L3.5 11 L6 8 Z" fill="#000"/></svg>
<svg class="a" style="left:110px;top:295px" width="27" height="15"><path d="M6.5 4 V13 M4.2 5.8 L6.5 4.2" stroke="#000" stroke-width="1" fill="none"/></svg>
<div class="a" style="left:155px;top:295px;width:44px;height:15px;background:#fff"></div>
<div class="a" style="left:155px;top:295px;width:44px;height:1px;background:#6d6d6d"></div>
<div class="a" style="left:155px;top:295px;width:1px;height:15px;background:#6d6d6d"></div>
<div class="a" style="left:198px;top:295px;width:1px;height:15px;background:#6d6d6d"></div>
<div class="a" style="left:155px;top:309px;width:27px;height:1px;background:#6d6d6d"></div>
<div class="a" style="left:183px;top:296px;width:14px;height:14px;background:#e6e6e6"></div>
<div class="a" style="left:183px;top:297px;width:1px;height:13px;background:#a6a6a6"></div>
<div class="a" style="left:196px;top:297px;width:1px;height:13px;background:#a6a6a6"></div>
<div class="a" style="left:183px;top:304px;width:14px;height:1px;background:#c4c4c4"></div>
<svg class="a" style="left:186px;top:298px" width="7" height="12"><path d="M1 4 L3.5 1 L6 4 Z M1 8 L3.5 11 L6 8 Z" fill="#000"/></svg>
<svg class="a" style="left:155px;top:295px" width="27" height="15"><path d="M6.5 4 V13 M4.2 5.8 L6.5 4.2" stroke="#000" stroke-width="1" fill="none"/><ellipse cx="12.2" cy="8.5" rx="2.6" ry="4.05" stroke="#000" stroke-width="1" fill="none"/></svg>
<div class="a" style="left:200px;top:296px;width:13px;height:13px;border:1px solid #333"></div>
<div class="a" style="left:201px;top:297px;width:11px;height:11px;background:#fff"></div>
<div class="a" style="left:63px;top:311px;width:46px;height:15px;background:#f2f2f2"></div>
<div class="a" style="left:110px;top:311px;width:44px;height:15px;background:#f2f2f2"></div>
<div class="a" style="left:155px;top:311px;width:44px;height:15px;background:#f2f2f2"></div>
<div class="a" style="left:200px;top:311px;width:34px;height:15px;background:#f2f2f2"></div>
<div class="a" style="left:235px;top:311px;width:24px;height:15px;background:#f2f2f2"></div>
<div class="a" style="left:260px;top:311px;width:24px;height:15px;background:#f2f2f2"></div>
<div class="a" style="left:238px;top:311px;width:16px;height:15px;background:#fffde2"></div>
<div class="a" style="left:263px;top:311px;width:16px;height:15px;background:#000"></div>
<div id="n13" class="t" style="left:65.30px;top:313.01px;font-size:11.59px;color:#000;"><span style="display:inline-block;transform-origin:0 0;transform:scaleX(0.9533);white-space:pre">TMXS</span></div>
<div class="a" style="left:110px;top:311px;width:44px;height:15px;background:#fff"></div>
<div class="a" style="left:110px;top:311px;width:44px;height:1px;background:#6d6d6d"></div>
<div class="a" style="left:110px;top:311px;width:1px;height:15px;background:#6d6d6d"></div>
<div class="a" style="left:153px;top:311px;width:1px;height:15px;background:#6d6d6d"></div>
<div class="a" style="left:110px;top:325px;width:27px;height:1px;background:#6d6d6d"></div>
<div class="a" style="left:138px;top:312px;width:14px;height:14px;background:#e6e6e6"></div>
<div class="a" style="left:138px;top:313px;width:1px;height:13px;background:#a6a6a6"></div>
<div class="a" style="left:151px;top:313px;width:1px;height:13px;background:#a6a6a6"></div>
<div class="a" style="left:138px;top:320px;width:14px;height:1px;background:#c4c4c4"></div>
<svg class="a" style="left:141px;top:314px" width="7" height="12"><path d="M1 4 L3.5 1 L6 4 Z M1 8 L3.5 11 L6 8 Z" fill="#000"/></svg>
<svg class="a" style="left:110px;top:311px" width="27" height="15"><path d="M6.5 4 V13 M4.2 5.8 L6.5 4.2" stroke="#000" stroke-width="1" fill="none"/></svg>
<div class="a" style="left:155px;top:311px;width:44px;height:15px;background:#fff"></div>
<div class="a" style="left:155px;top:311px;width:44px;height:1px;background:#6d6d6d"></div>
<div class="a" style="left:155px;top:311px;width:1px;height:15px;background:#6d6d6d"></div>
<div class="a" style="left:198px;top:311px;width:1px;height:15px;background:#6d6d6d"></div>
<div class="a" style="left:155px;top:325px;width:27px;height:1px;background:#6d6d6d"></div>
<div class="a" style="left:183px;top:312px;width:14px;height:14px;background:#e6e6e6"></div>
<div class="a" style="left:183px;top:313px;width:1px;height:13px;background:#a6a6a6"></div>
<div class="a" style="left:196px;top:313px;width:1px;height:13px;background:#a6a6a6"></div>
<div class="a" style="left:183px;top:320px;width:14px;height:1px;background:#c4c4c4"></div>
<svg class="a" style="left:186px;top:314px" width="7" height="12"><path d="M1 4 L3.5 1 L6 4 Z M1 8 L3.5 11 L6 8 Z" fill="#000"/></svg>
<svg class="a" style="left:155px;top:311px" width="27" height="15"><path d="M6.5 4 V13 M4.2 5.8 L6.5 4.2" stroke="#000" stroke-width="1" fill="none"/><ellipse cx="12.2" cy="8.5" rx="2.6" ry="4.05" stroke="#000" stroke-width="1" fill="none"/></svg>
<div class="a" style="left:200px;top:312px;width:13px;height:13px;border:1px solid #333"></div>
<div class="a" style="left:201px;top:313px;width:11px;height:11px;background:#fff"></div>
<div class="a" style="left:238px;top:327px;width:16px;height:15px;background:#fffde2"></div>
<div class="a" style="left:263px;top:327px;width:16px;height:15px;background:#000"></div>
<div id="n14" class="t" style="left:65.30px;top:329.01px;font-size:11.59px;color:#000;font-weight:bold;"><span style="display:inline-block;transform-origin:0 0;transform:scaleX(1.0467);white-space:pre">TSX</span></div>
<div class="a" style="left:110px;top:327px;width:44px;height:15px;background:#fff"></div>
<div class="a" style="left:110px;top:327px;width:44px;height:1px;background:#6d6d6d"></div>
<div class="a" style="left:110px;top:327px;width:1px;height:15px;background:#6d6d6d"></div>
<div class="a" style="left:153px;top:327px;width:1px;height:15px;background:#6d6d6d"></div>
<div class="a" style="left:110px;top:341px;width:27px;height:1px;background:#6d6d6d"></div>
<div class="a" style="left:138px;top:328px;width:14px;height:14px;background:#e6e6e6"></div>
<div class="a" style="left:138px;top:329px;width:1px;height:13px;background:#a6a6a6"></div>
<div class="a" style="left:151px;top:329px;width:1px;height:13px;background:#a6a6a6"></div>
<div class="a" style="left:138px;top:336px;width:14px;height:1px;background:#c4c4c4"></div>
<svg class="a" style="left:141px;top:330px" width="7" height="12"><path d="M1 4 L3.5 1 L6 4 Z M1 8 L3.5 11 L6 8 Z" fill="#000"/></svg>
<svg class="a" style="left:110px;top:327px" width="27" height="15"><path d="M6.5 4 V13 M4.2 5.8 L6.5 4.2" stroke="#000" stroke-width="1" fill="none"/></svg>
<div class="a" style="left:155px;top:327px;width:44px;height:15px;background:#fff"></div>
<div class="a" style="left:155px;top:327px;width:44px;height:1px;background:#6d6d6d"></div>
<div class="a" style="left:155px;top:327px;width:1px;height:15px;background:#6d6d6d"></div>
<div class="a" style="left:198px;top:327px;width:1px;height:15px;background:#6d6d6d"></div>
<div class="a" style="left:155px;top:341px;width:27px;height:1px;background:#6d6d6d"></div>
<div class="a" style="left:183px;top:328px;width:14px;height:14px;background:#e6e6e6"></div>
<div class="a" style="left:183px;top:329px;width:1px;height:13px;background:#a6a6a6"></div>
<div class="a" style="left:196px;top:329px;width:1px;height:13px;background:#a6a6a6"></div>
<div class="a" style="left:183px;top:336px;width:14px;height:1px;background:#c4c4c4"></div>
<svg class="a" style="left:186px;top:330px" width="7" height="12"><path d="M1 4 L3.5 1 L6 4 Z M1 8 L3.5 11 L6 8 Z" fill="#000"/></svg>
<svg class="a" style="left:155px;top:327px" width="27" height="15"><path d="M6.5 4 V13 M4.2 5.8 L6.5 4.2" stroke="#000" stroke-width="1" fill="none"/><ellipse cx="12.2" cy="8.5" rx="2.6" ry="4.05" stroke="#000" stroke-width="1" fill="none"/></svg>
<div class="a" style="left:200px;top:328px;width:13px;height:13px;border:1px solid #333"></div>
<div class="a" style="left:201px;top:329px;width:11px;height:11px;background:#fff"></div>
<div class="a" style="left:359px;top:83px;width:16px;height:260px;background:#f0f0f0"></div>
<div class="a" style="left:359px;top:201px;width:15px;height:125px;background:#cdcdcd"></div>
<svg class="a" style="left:359px;top:83px" width="17" height="260"><path d="M4.2 10.8 L7.5 7.5 L10.8 10.8" fill="none" stroke="#606060" stroke-width="2"/><path d="M4.2 250.2 L7.5 253.5 L10.8 250.2" fill="none" stroke="#606060" stroke-width="2"/></svg>
<div class="a" style="left:393px;top:59px;width:1px;height:314px;background:#dcdcdc"></div>
<div class="a" style="left:553px;top:59px;width:1px;height:314px;background:#dcdcdc"></div>
<div class="a" style="left:393px;top:372px;width:161px;height:1px;background:#dcdcdc"></div>
<div class="a" style="left:393px;top:59px;width:7px;height:1px;background:#dcdcdc"></div>
<div class="a" style="left:514px;top:59px;width:40px;height:1px;background:#dcdcdc"></div>
<div id="gPrice" class="t" style="left:400.70px;top:52.78px;font-size:11.73px;color:#000;"><span style="display:inline-block;transform-origin:0 0;transform:scaleX(0.8796);white-space:pre">Price Level Color Bands</span></div>
<div class="a" style="left:403px;top:73px;width:90px;height:291px;border:1px solid #828790"></div>
<div class="a" style="left:404px;top:74px;width:22px;height:272px;background:#f0f0f0"></div>
<div class="a" style="left:404px;top:74px;width:22px;height:19px;background:#fff"></div>
<div class="a" style="left:425px;top:75px;width:1px;height:17px;background:#e5e5e5"></div>
<div class="a" style="left:464px;top:75px;width:1px;height:17px;background:#e5e5e5"></div>
<div id="pBGD" class="t" style="left:437.00px;top:79.56px;font-size:9.22px;color:#000;"><span style="display:inline-block;transform-origin:0 0;transform:scaleX(0.8360);white-space:pre">BGD</span></div>
<div class="a" style="left:465px;top:79.56px;width:27px;height:12.0px;overflow:hidden"><div id="pColor" class="t" style="left:474.20px;top:79.56px;font-size:9.22px;color:#000;;left:9.20px;top:0"><span style="display:inline-block;transform-origin:0 0;transform:scaleX(1.0000);white-space:pre">Color</span></div></div>
<div class="a" style="left:404px;top:93px;width:22px;height:16px;background:#fff"></div>
<div class="a" style="left:426px;top:93px;width:38px;height:15px;background:#ffff80"></div>
<div class="a" style="left:465px;top:93px;width:27px;height:15px;background:#000"></div>
<div id="pl0" class="t" style="left:409.20px;top:96.68px;font-size:9.08px;color:#000;"><span style="display:inline-block;transform-origin:0 0;transform:scaleX(1.0000);white-space:pre">1</span></div>
<div class="a" style="left:404px;top:109px;width:22px;height:16px;background:#fff"></div>
<div class="a" style="left:426px;top:109px;width:38px;height:15px;background:#ff1c1c"></div>
<div class="a" style="left:465px;top:109px;width:27px;height:15px;background:#000"></div>
<div id="pl1" class="t" style="left:409.20px;top:112.68px;font-size:9.08px;color:#000;"><span style="display:inline-block;transform-origin:0 0;transform:scaleX(1.0000);white-space:pre">2</span></div>
<div class="a" style="left:404px;top:125px;width:22px;height:16px;background:#fff"></div>
<div class="a" style="left:426px;top:125px;width:38px;height:15px;background:#0080ff"></div>
<div class="a" style="left:465px;top:125px;width:27px;height:15px;background:#000"></div>
<div id="pl2" class="t" style="left:409.20px;top:128.68px;font-size:9.08px;color:#000;"><span style="display:inline-block;transform-origin:0 0;transform:scaleX(1.0000);white-space:pre">3</span></div>
<div class="a" style="left:404px;top:141px;width:22px;height:16px;background:#fff"></div>
<div class="a" style="left:426px;top:141px;width:38px;height:15px;background:#7c55a8"></div>
<div class="a" style="left:465px;top:141px;width:27px;height:15px;background:#000"></div>
<div id="pl3" class="t" style="left:409.20px;top:144.68px;font-size:9.08px;color:#000;"><span style="display:inline-block;transform-origin:0 0;transform:scaleX(1.0000);white-space:pre">4</span></div>
<div class="a" style="left:404px;top:157px;width:22px;height:16px;background:#fff"></div>
<div class="a" style="left:426px;top:157px;width:38px;height:15px;background:#40f2f2"></div>
<div class="a" style="left:465px;top:157px;width:27px;height:15px;background:#000"></div>
<div id="pl4" class="t" style="left:409.20px;top:160.68px;font-size:9.08px;color:#000;"><span style="display:inline-block;transform-origin:0 0;transform:scaleX(1.0000);white-space:pre">5</span></div>
<div class="a" style="left:404px;top:173px;width:22px;height:16px;background:#fff"></div>
<div class="a" style="left:426px;top:173px;width:38px;height:15px;background:#00c000"></div>
<div class="a" style="left:465px;top:173px;width:27px;height:15px;background:#000"></div>
<div id="pl5" class="t" style="left:409.20px;top:176.68px;font-size:9.08px;color:#000;"><span style="display:inline-block;transform-origin:0 0;transform:scaleX(1.0000);white-space:pre">6</span></div>
<div class="a" style="left:404px;top:189px;width:22px;height:16px;background:#fff"></div>
<div class="a" style="left:426px;top:189px;width:38px;height:15px;background:#c022c0"></div>
<div class="a" style="left:465px;top:189px;width:27px;height:15px;background:#000"></div>
<div id="pl6" class="t" style="left:409.20px;top:192.68px;font-size:9.08px;color:#000;"><span style="display:inline-block;transform-origin:0 0;transform:scaleX(1.0000);white-space:pre">7</span></div>
<div class="a" style="left:404px;top:205px;width:22px;height:16px;background:#fff"></div>
<div class="a" style="left:426px;top:205px;width:38px;height:15px;background:#a9a874"></div>
<div class="a" style="left:465px;top:205px;width:27px;height:15px;background:#000"></div>
<div id="pl7" class="t" style="left:409.20px;top:208.68px;font-size:9.08px;color:#000;"><span style="display:inline-block;transform-origin:0 0;transform:scaleX(1.0000);white-space:pre">8</span></div>
<div class="a" style="left:404px;top:221px;width:22px;height:16px;background:#fff"></div>
<div class="a" style="left:426px;top:221px;width:38px;height:15px;background:#67bba3"></div>
<div class="a" style="left:465px;top:221px;width:27px;height:15px;background:#000"></div>
<div id="pl8" class="t" style="left:409.20px;top:224.68px;font-size:9.08px;color:#000;"><span style="display:inline-block;transform-origin:0 0;transform:scaleX(1.0000);white-space:pre">9</span></div>
<div class="a" style="left:404px;top:237px;width:22px;height:16px;background:#fff"></div>
<div class="a" style="left:426px;top:237px;width:38px;height:15px;background:#c08f12"></div>
<div class="a" style="left:465px;top:237px;width:27px;height:15px;background:#000"></div>
<div id="pl9" class="t" style="left:408.80px;top:240.68px;font-size:9.08px;color:#000;"><span style="display:inline-block;transform-origin:0 0;transform:scaleX(1.0000);white-space:pre">10</span></div>
<div class="a" style="left:404px;top:253px;width:22px;height:16px;background:#fff"></div>
<div class="a" style="left:426px;top:253px;width:38px;height:15px;background:#646464"></div>
<div class="a" style="left:465px;top:253px;width:27px;height:15px;background:#000"></div>
<div id="pl10" class="t" style="left:408.80px;top:256.68px;font-size:9.08px;color:#000;"><span style="display:inline-block;transform-origin:0 0;transform:scaleX(1.0000);white-space:pre">11</span></div>
<div class="a" style="left:404px;top:347px;width:88px;height:16px;background:#f0f0f0"></div>
<div class="a" style="left:421px;top:347px;width:45px;height:15px;background:#cdcdcd"></div>
<svg class="a" style="left:404px;top:347px" width="88" height="16"><path d="M9.3 4.2 L6 7.5 L9.3 10.8" fill="none" stroke="#606060" stroke-width="2"/><path d="M78.7 4.2 L82 7.5 L78.7 10.8" fill="none" stroke="#606060" stroke-width="2"/></svg>
<div class="a" style="left:499px;top:73px;width:45px;height:290px;border:1px solid #dcdcdc"></div>
<div class="a" style="left:510px;top:157px;width:23px;height:21px;background:#e1e1e1;border:1px solid #adadad"></div>
<div class="a" style="left:510px;top:259px;width:23px;height:21px;background:#e1e1e1;border:1px solid #adadad"></div>
<svg class="a" style="left:510px;top:157px" width="23" height="21"><path d="M8 11.5 H15 M11.5 8 V15" stroke="#000" stroke-width="1"/></svg>
<svg class="a" style="left:510px;top:259px" width="23" height="21"><path d="M9.5 11.5 H12.5" stroke="#000" stroke-width="1"/></svg>
<div class="a" style="left:563px;top:59px;width:1px;height:314px;background:#dcdcdc"></div>
<div class="a" style="left:743px;top:59px;width:1px;height:314px;background:#dcdcdc"></div>
<div class="a" style="left:563px;top:372px;width:181px;height:1px;background:#dcdcdc"></div>
<div class="a" style="left:563px;top:59px;width:8px;height:1px;background:#dcdcdc"></div>
<div class="a" style="left:668px;top:59px;width:76px;height:1px;background:#dcdcdc"></div>
<div id="gAxes" class="t" style="left:571.30px;top:52.78px;font-size:11.73px;color:#000;"><span style="display:inline-block;transform-origin:0 0;transform:scaleX(0.9124);white-space:pre">Axes Color Settings</span></div>
<div class="a" style="left:573px;top:73px;width:110px;height:291px;border:1px solid #828790"></div>
<div class="a" style="left:612px;top:75px;width:1px;height:17px;background:#e5e5e5"></div>
<div class="a" style="left:651px;top:75px;width:1px;height:17px;background:#e5e5e5"></div>
<div id="aAxe" class="t" style="left:586.00px;top:79.28px;font-size:9.08px;color:#000;"><span style="display:inline-block;transform-origin:0 0;transform:scaleX(0.9206);white-space:pre">Axe</span></div>
<div id="aBGD" class="t" style="left:624.30px;top:79.48px;font-size:9.08px;color:#000;"><span style="display:inline-block;transform-origin:0 0;transform:scaleX(0.8337);white-space:pre">BGD</span></div>
<div class="a" style="left:652px;top:79.48px;width:30px;height:11.8px;overflow:hidden"><div id="aColor" class="t" style="left:661.20px;top:79.48px;font-size:9.08px;color:#000;;left:9.20px;top:0"><span style="display:inline-block;transform-origin:0 0;transform:scaleX(1.0000);white-space:pre">Color</span></div></div>
<div class="a" style="left:613px;top:93px;width:38px;height:15px;background:#000"></div>
<div class="a" style="left:652px;top:93px;width:30px;height:15px;background:#f2ee00"></div>
<div id="ax0" class="t" style="left:577.40px;top:94.69px;font-size:11.17px;color:#000;"><span style="display:inline-block;transform-origin:0 0;transform:scaleX(0.9308);white-space:pre">MSCO</span></div>
<div class="a" style="left:575px;top:109px;width:37px;height:15px;background:#f2f2f2"></div>
<div class="a" style="left:613px;top:109px;width:38px;height:15px;background:#000"></div>
<div class="a" style="left:652px;top:109px;width:30px;height:15px;background:#e30c0c"></div>
<div id="ax1" class="t" style="left:577.40px;top:110.69px;font-size:11.17px;color:#000;"><span style="display:inline-block;transform-origin:0 0;transform:scaleX(0.9343);white-space:pre">LEHM</span></div>
<div class="a" style="left:613px;top:125px;width:38px;height:15px;background:#000"></div>
<div class="a" style="left:652px;top:125px;width:30px;height:15px;background:#00dc00"></div>
<div id="ax2" class="t" style="left:577.40px;top:126.69px;font-size:11.17px;color:#000;"><span style="display:inline-block;transform-origin:0 0;transform:scaleX(0.8860);white-space:pre">BRMS</span></div>
<div class="a" style="left:575px;top:141px;width:37px;height:15px;background:#f2f2f2"></div>
<div class="a" style="left:613px;top:141px;width:38px;height:15px;background:#000"></div>
<div class="a" style="left:652px;top:141px;width:30px;height:15px;background:#ec85ec"></div>
<div id="ax3" class="t" style="left:577.40px;top:142.69px;font-size:11.17px;color:#000;"><span style="display:inline-block;transform-origin:0 0;transform:scaleX(0.9697);white-space:pre">GETC</span></div>
<div class="a" style="left:613px;top:157px;width:38px;height:15px;background:#000"></div>
<div class="a" style="left:652px;top:157px;width:30px;height:15px;background:#00ffff"></div>
<div id="ax4" class="t" style="left:577.40px;top:158.69px;font-size:11.17px;color:#000;font-weight:bold;"><span style="display:inline-block;transform-origin:0 0;transform:scaleX(1.1206);white-space:pre">TIMB</span></div>
<div class="a" style="left:575px;top:157px;width:36px;height:1px;background:repeating-linear-gradient(90deg,#000 0 1px,transparent 1px 2px)"></div>
<div class="a" style="left:575px;top:171px;width:36px;height:1px;background:repeating-linear-gradient(90deg,#000 0 1px,transparent 1px 2px)"></div>
<div class="a" style="left:575px;top:157px;width:1px;height:15px;background:repeating-linear-gradient(180deg,#000 0 1px,transparent 1px 2px)"></div>
<div class="a" style="left:610px;top:157px;width:1px;height:15px;background:repeating-linear-gradient(180deg,#000 0 1px,transparent 1px 2px)"></div>
<div class="a" style="left:574px;top:347px;width:108px;height:16px;background:#f0f0f0"></div>
<div class="a" style="left:591px;top:347px;width:68px;height:15px;background:#cdcdcd"></div>
<svg class="a" style="left:574px;top:347px" width="108" height="16"><path d="M9.3 4.2 L6 7.5 L9.3 10.8" fill="none" stroke="#606060" stroke-width="2"/><path d="M98.7 4.2 L102 7.5 L98.7 10.8" fill="none" stroke="#606060" stroke-width="2"/></svg>
<div class="a" style="left:689px;top:73px;width:45px;height:290px;border:1px solid #dcdcdc"></div>
<div class="a" style="left:700px;top:131px;width:23px;height:21px;background:#e1e1e1;border:2px solid #0078d7"></div>
<svg class="a" style="left:700px;top:131px" width="23" height="21"><path d="M8 11.5 H15 M11.5 8 V15" stroke="#000" stroke-width="1"/></svg>
<div class="a" style="left:700px;top:207px;width:23px;height:21px;background:#e1e1e1;border:1px solid #adadad"></div>
<svg class="a" style="left:700px;top:207px" width="23" height="21"><path d="M9.5 11.5 H12.5" stroke="#000" stroke-width="1"/></svg>
<div class="a" style="left:700px;top:283px;width:23px;height:21px;background:#e1e1e1;border:1px solid #adadad"></div>
<div id="axX" class="t" style="left:707.50px;top:288.01px;font-size:11.59px;color:#000;"><span style="display:inline-block;transform-origin:0 0;transform:scaleX(1.0179);white-space:pre">x</span></div>
<div class="a" style="left:53px;top:386px;width:1px;height:74px;background:#dcdcdc"></div>
<div class="a" style="left:343px;top:386px;width:1px;height:74px;background:#dcdcdc"></div>
<div class="a" style="left:53px;top:459px;width:291px;height:1px;background:#dcdcdc"></div>
<div class="a" style="left:53px;top:386px;width:8px;height:1px;background:#dcdcdc"></div>
<div class="a" style="left:131px;top:386px;width:213px;height:1px;background:#dcdcdc"></div>
<div id="gOther" class="t" style="left:61.60px;top:380.08px;font-size:11.73px;color:#000;"><span style="display:inline-block;transform-origin:0 0;transform:scaleX(0.9215);white-space:pre">Other Options</span></div>
<div id="oGrid" class="t" style="left:62.50px;top:415.71px;font-size:11.59px;color:#000;"><span style="display:inline-block;transform-origin:0 0;transform:scaleX(0.8748);white-space:pre">Grid Line Color</span></div>
<div class="a" style="left:149px;top:410px;width:32px;height:20px;background:#d2691e;border-right:1px solid #a0a0a0;border-bottom:1px solid #a0a0a0;border-left:1px solid #fff;border-top:1px solid #fff"></div>
<div id="oHeader" class="t" style="left:208.30px;top:415.91px;font-size:11.59px;color:#000;"><span style="display:inline-block;transform-origin:0 0;transform:scaleX(0.9047);white-space:pre">Header</span></div>
<div id="oBack" class="t" style="left:267.00px;top:395.91px;font-size:11.59px;color:#000;"><span style="display:inline-block;transform-origin:0 0;transform:scaleX(0.8917);white-space:pre">Back</span></div>
<div id="oText" class="t" style="left:307.30px;top:395.91px;font-size:11.59px;color:#000;"><span style="display:inline-block;transform-origin:0 0;transform:scaleX(1.0583);white-space:pre">Text</span></div>
<div class="a" style="left:263px;top:410px;width:32px;height:20px;background:#d3d3d3;border-right:1px solid #a0a0a0;border-bottom:1px solid #a0a0a0;border-left:1px solid #fff;border-top:1px solid #fff"></div>
<div class="a" style="left:303px;top:410px;width:32px;height:20px;background:#000;border-right:1px solid #a0a0a0;border-bottom:1px solid #a0a0a0;border-left:1px solid #fff;border-top:1px solid #fff"></div>
<div id="oBackground" class="t" style="left:183.30px;top:442.01px;font-size:11.59px;color:#000;"><span style="display:inline-block;transform-origin:0 0;transform:scaleX(0.8971);white-space:pre">Background</span></div>
<div class="a" style="left:263px;top:436px;width:32px;height:20px;background:#808080;border-right:1px solid #a0a0a0;border-bottom:1px solid #a0a0a0;border-left:1px solid #fff;border-top:1px solid #fff"></div>
<div class="a" style="left:353px;top:386px;width:1px;height:74px;background:#dcdcdc"></div>
<div class="a" style="left:533px;top:386px;width:1px;height:74px;background:#dcdcdc"></div>
<div class="a" style="left:353px;top:459px;width:181px;height:1px;background:#dcdcdc"></div>
<div class="a" style="left:353px;top:386px;width:8px;height:1px;background:#dcdcdc"></div>
<div class="a" style="left:428px;top:386px;width:106px;height:1px;background:#dcdcdc"></div>
<div id="gLevel1" class="t" style="left:361.10px;top:379.98px;font-size:11.73px;color:#000;"><span style="display:inline-block;transform-origin:0 0;transform:scaleX(0.8909);white-space:pre">Level1 Colors</span></div>
<div id="lBack" class="t" style="left:437.20px;top:395.71px;font-size:11.59px;color:#000;"><span style="display:inline-block;transform-origin:0 0;transform:scaleX(0.8723);white-space:pre">Back</span></div>
<div id="lText" class="t" style="left:477.40px;top:395.71px;font-size:11.59px;color:#000;"><span style="display:inline-block;transform-origin:0 0;transform:scaleX(1.0348);white-space:pre">Text</span></div>
<div id="lUp" class="t" style="left:362.40px;top:415.71px;font-size:11.59px;color:#000;"><span style="display:inline-block;transform-origin:0 0;transform:scaleX(0.8740);white-space:pre">Up Tick</span></div>
<div id="lDown" class="t" style="left:362.40px;top:441.81px;font-size:11.59px;color:#000;"><span style="display:inline-block;transform-origin:0 0;transform:scaleX(0.8956);white-space:pre">Down Tick</span></div>
<div class="a" style="left:433px;top:410px;width:32px;height:20px;background:#008000;border-right:1px solid #a0a0a0;border-bottom:1px solid #a0a0a0;border-left:1px solid #fff;border-top:1px solid #fff"></div>
<div class="a" style="left:473px;top:410px;width:32px;height:20px;background:#000;border-right:1px solid #a0a0a0;border-bottom:1px solid #a0a0a0;border-left:1px solid #fff;border-top:1px solid #fff"></div>
<div class="a" style="left:433px;top:436px;width:32px;height:20px;background:#ff0000;border-right:1px solid #a0a0a0;border-bottom:1px solid #a0a0a0;border-left:1px solid #fff;border-top:1px solid #fff"></div>
<div class="a" style="left:473px;top:436px;width:32px;height:20px;background:#000;border-right:1px solid #a0a0a0;border-bottom:1px solid #a0a0a0;border-left:1px solid #fff;border-top:1px solid #fff"></div>
<div class="a" style="left:543px;top:386px;width:1px;height:74px;background:#dcdcdc"></div>
<div class="a" style="left:743px;top:386px;width:1px;height:74px;background:#dcdcdc"></div>
<div class="a" style="left:543px;top:459px;width:201px;height:1px;background:#dcdcdc"></div>
<div class="a" style="left:543px;top:386px;width:8px;height:1px;background:#dcdcdc"></div>
<div class="a" style="left:640px;top:386px;width:104px;height:1px;background:#dcdcdc"></div>
<div id="gOrder" class="t" style="left:551.80px;top:379.98px;font-size:11.73px;color:#000;"><span style="display:inline-block;transform-origin:0 0;transform:scaleX(0.9031);white-space:pre">Order Highlighting</span></div>
<div class="a" style="left:553px;top:404px;width:13px;height:13px;border:1px solid #333"></div>
<div id="oHl" class="t" style="left:570.60px;top:405.11px;font-size:11.59px;color:#000;"><span style="display:inline-block;transform-origin:0 0;transform:scaleX(0.9282);white-space:pre">Highlight Accepted Orders</span></div>
<div id="rBack" class="t" style="left:627.00px;top:421.91px;font-size:11.59px;color:#000;"><span style="display:inline-block;transform-origin:0 0;transform:scaleX(0.8723);white-space:pre">Back</span></div>
<div id="rText" class="t" style="left:667.30px;top:421.91px;font-size:11.59px;color:#000;"><span style="display:inline-block;transform-origin:0 0;transform:scaleX(1.0395);white-space:pre">Text</span></div>
<div id="rColor" class="t" style="left:552.80px;top:442.11px;font-size:11.59px;color:#000;"><span style="display:inline-block;transform-origin:0 0;transform:scaleX(0.9033);white-space:pre">Order Color</span></div>
<div class="a" style="left:623px;top:436px;width:32px;height:20px;background:#000;border-right:1px solid #a0a0a0;border-bottom:1px solid #a0a0a0;border-left:1px solid #fff;border-top:1px solid #fff"></div>
<div class="a" style="left:663px;top:436px;width:32px;height:20px;background:#fff;border-right:1px solid #a0a0a0;border-bottom:1px solid #a0a0a0;border-left:1px solid #fff;border-top:1px solid #fff"></div>
<div class="a" style="left:31px;top:481px;width:731px;height:69px;border:1px solid #dcdcdc"></div>
<div class="a" style="left:372px;top:492px;width:114px;height:21px;background:#e1e1e1;border:1px solid #adadad"></div>
<div id="bLoad" class="t" style="left:397.10px;top:496.18px;font-size:11.73px;color:#000;"><span style="display:inline-block;transform-origin:0 0;transform:scaleX(0.9244);white-space:pre">Load Default</span></div>
<div class="a" style="left:500px;top:492px;width:113px;height:21px;background:#e1e1e1;border:1px solid #adadad"></div>
<div id="bSave" class="t" style="left:517.40px;top:496.18px;font-size:11.73px;color:#000;"><span style="display:inline-block;transform-origin:0 0;transform:scaleX(0.9200);white-space:pre">Save as Default</span></div>
<div class="a" style="left:627px;top:492px;width:114px;height:21px;background:#e1e1e1;border:1px solid #adadad"></div>
<div id="bApply" class="t" style="left:669.70px;top:496.18px;font-size:11.73px;color:#000;"><span style="display:inline-block;transform-origin:0 0;transform:scaleX(0.9100);white-space:pre">Apply</span></div>
<div class="a" style="left:500px;top:527px;width:113px;height:21px;background:#e1e1e1;border:1px solid #adadad"></div>
<div id="bOK" class="t" style="left:548.40px;top:531.18px;font-size:11.73px;color:#000;"><span style="display:inline-block;transform-origin:0 0;transform:scaleX(0.8494);white-space:pre">OK</span></div>
<div class="a" style="left:627px;top:527px;width:114px;height:21px;background:#e1e1e1;border:1px solid #adadad"></div>
<div id="bCancel" class="t" style="left:667.30px;top:531.18px;font-size:11.73px;color:#000;"><span style="display:inline-block;transform-origin:0 0;transform:scaleX(0.8817);white-space:pre">Cancel</span></div>
</body></html>
